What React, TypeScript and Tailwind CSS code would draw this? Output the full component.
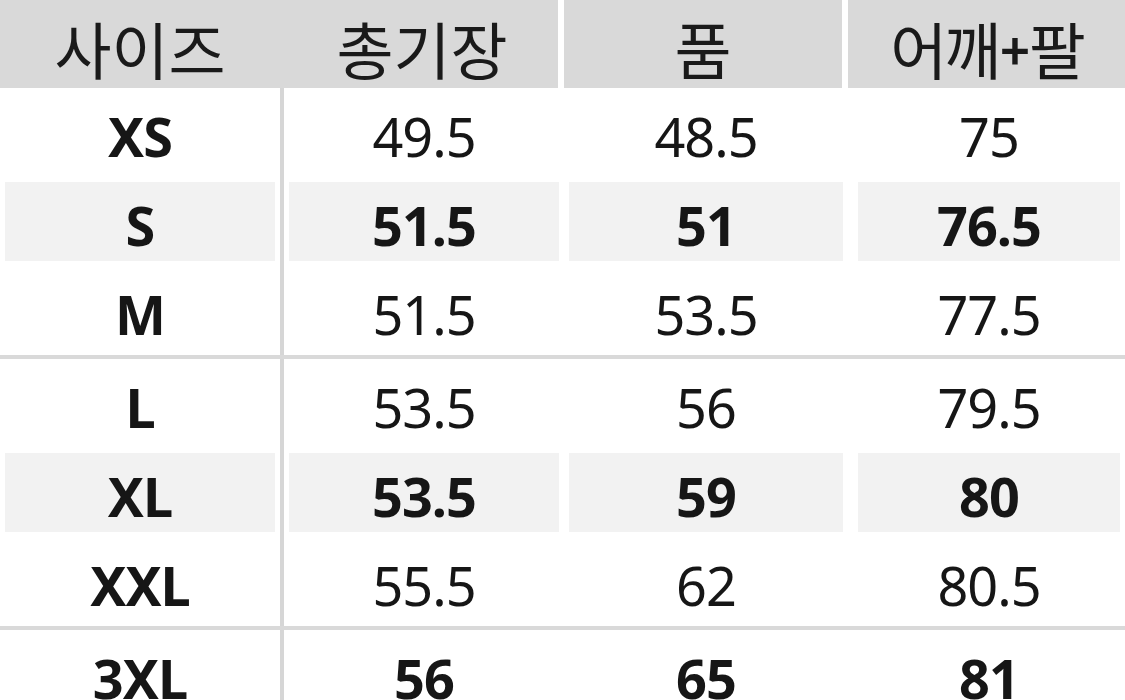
import React from "react";

type Row = { size: string; len: string; chest: string; sleeve: string; shaded?: boolean; bold?: boolean; lineAfter?: boolean };

const rows: Row[] = [
  { size: "XS", len: "49.5", chest: "48.5", sleeve: "75" },
  { size: "S", len: "51.5", chest: "51", sleeve: "76.5", shaded: true, bold: true },
  { size: "M", len: "51.5", chest: "53.5", sleeve: "77.5", lineAfter: true },
  { size: "L", len: "53.5", chest: "56", sleeve: "79.5" },
  { size: "XL", len: "53.5", chest: "59", sleeve: "80", shaded: true, bold: true },
  { size: "XXL", len: "55.5", chest: "62", sleeve: "80.5", lineAfter: true },
  { size: "3XL", len: "56", chest: "65", sleeve: "81", bold: true },
];

function Cell({ children, shaded, bold, className = "" }: { children: React.ReactNode; shaded?: boolean; bold?: boolean; className?: string }) {
  return (
    <div className={`h-full p-[5px] ${className}`}>
      <div
        className={`h-full flex items-center justify-center pt-[7px] text-[54px] leading-none tracking-[-1px] ${
          shaded ? "bg-[#f2f2f2]" : "bg-white"
        } ${bold ? "font-bold" : "font-normal"}`}
      >
        {children}
      </div>
    </div>
  );
}

export default function App() {
  return (
    <div className="w-[1125px] h-[700px] overflow-hidden bg-white text-[#161616] font-['Noto_Sans','Noto_Sans_CJK_KR',sans-serif]">
      {/* header */}
      <div className="flex h-[88px] text-[62px] leading-none text-[#1a1a1a] font-['Noto_Sans_CJK_KR','Noto_Sans',sans-serif]">
        <div className="w-[280px] bg-[#d9d9d9] flex items-center justify-center pt-[7px]">사이즈</div>
        <div className="w-[4px] bg-[#d9d9d9]" />
        <div className="w-[280px] bg-[#d9d9d9] border-r-[6px] border-white flex items-center justify-center pt-[7px] pl-[2px]">
          총기장
        </div>
        <div className="w-[284px] bg-[#d9d9d9] border-r-[6px] border-white flex items-center justify-center pt-[7px]">품</div>
        <div className="flex-1 bg-[#d9d9d9] flex items-center justify-center pt-[7px] tracking-[-3px]">
          어깨<span className="font-bold text-[50px] mx-[2px]">+</span>팔
        </div>
      </div>

      {rows.map((r) => (
        <React.Fragment key={r.size}>
          <div className="flex h-[89px]">
            <Cell shaded={r.shaded} bold className="w-[280px]">
              {r.size}
            </Cell>
            <div className="w-[4px] bg-[#d6d6d6]" />
            <Cell shaded={r.shaded} bold={r.bold} className="w-[280px]">
              {r.len}
            </Cell>
            <Cell shaded={r.shaded} bold={r.bold} className="w-[284px]">
              {r.chest}
            </Cell>
            <Cell shaded={r.shaded} bold={r.bold} className="flex-1 pl-[10px]">
              {r.sleeve}
            </Cell>
          </div>
          {r.lineAfter && <div className="h-[4px] bg-[#d9d9d9]" />}
        </React.Fragment>
      ))}
    </div>
  );
}
